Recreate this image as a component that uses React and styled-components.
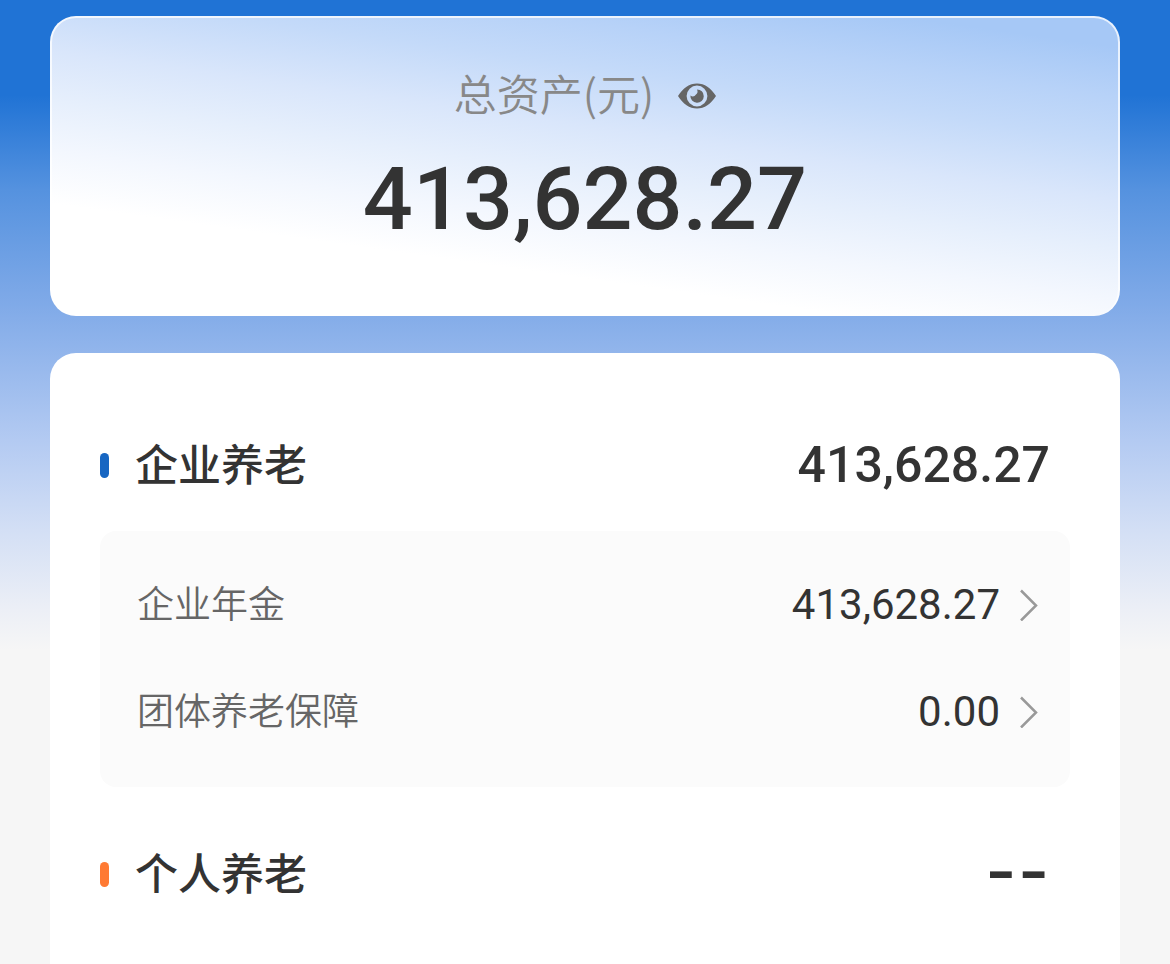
import { useState } from "react";
import styled, { createGlobalStyle } from "styled-components";

const GlobalStyle = createGlobalStyle`
  * {
    box-sizing: border-box;
  }
  body {
    margin: 0;
    background-color: #f6f6f6;
    font-family: "Noto Sans CJK SC", sans-serif;
    color: #333333;
  }
  h1,
  h2,
  p,
  ul {
    margin: 0;
    padding: 0;
  }
`;

const Page = styled.main`
  display: flex;
  flex-direction: column;
  gap: 37px;
  min-height: 100vh;
  padding: 16px 50px 0;
  background: linear-gradient(
    180deg,
    #2073d5 0,
    #2073d5 95px,
    #5592df 190px,
    #80aae8 305px,
    #b3caf2 440px,
    #d3dff5 530px,
    #eceff6 610px,
    #f6f6f6 650px,
    #f6f6f6 100%
  );
`;

const TotalCard = styled.section`
  display: flex;
  flex-direction: column;
  align-items: center;
  height: 300px;
  padding-top: 48px;
  border: 2px solid rgba(255, 255, 255, 0.75);
  border-bottom: none;
  border-radius: 26px;
  background: linear-gradient(
      188deg,
      #a6c8f6 7%,
      #b7d2f8 18%,
      #c4daf9 28%,
      #d9e6fb 41%,
      #e6effc 52%,
      #f3f7fe 63%,
      #ffffff 75%
    )
    border-box;
`;

const TotalHeader = styled.div`
  display: flex;
  align-items: center;
  gap: 24px;
  height: 60px;
`;

const TotalLabel = styled.h1`
  padding-bottom: 8px;
  font-size: 43px;
  font-weight: 350;
  line-height: 52px;
  color: #888888;
`;

const EyeButton = styled.button`
  display: flex;
  padding: 0;
  border: none;
  background: none;
  color: #666666;
  cursor: pointer;
`;

const Amount = styled.p`
  font-family: Roboto, "Liberation Sans", sans-serif;
  font-size: ${({ $size }) => $size}px;
  font-weight: ${({ $weight }) => $weight || 500};
  line-height: 1;
`;

const TotalAmount = styled(Amount)`
  margin-top: 29px;
`;

const DetailCard = styled.section`
  flex: 1;
  padding: 79px 50px 0;
  border-radius: 26px 26px 0 0;
  background-color: #ffffff;
`;

const Group = styled.section`
  margin-bottom: 54px;
`;

const GroupHeader = styled.header`
  display: flex;
  align-items: center;
  height: 66px;
  padding-right: 20px;
`;

const Marker = styled.span`
  width: 9px;
  height: 25px;
  margin-right: 26px;
  border-radius: 5px;
  background-color: ${({ $color }) => $color};
`;

const GroupTitle = styled.h2`
  flex: 1;
  padding-bottom: 6px;
  font-size: 43px;
  font-weight: 500;
  line-height: 60px;
`;

const EmptyAmount = styled(Amount)`
  padding-bottom: 14px;
  font-family: Lato, "Liberation Sans", sans-serif;
`;

const ProductList = styled.ul`
  margin-top: 33px;
  padding: 20px 32px 22px 37px;
  border-radius: 16px;
  background-color: #fbfbfb;
  list-style: none;
`;

const ProductLink = styled.a`
  display: flex;
  align-items: center;
  height: 107px;
  color: inherit;
  text-decoration: none;
`;

const ProductName = styled.span`
  flex: 1;
  padding-bottom: 6px;
  font-size: 37px;
  font-weight: 350;
  color: #666666;
`;

const Chevron = styled.svg`
  margin-left: 19px;
`;

const EyeIcon = () => (
  <svg width="38" height="26" viewBox="0 0 38 26" aria-hidden="true">
    <path
      fill="currentColor"
      fillRule="evenodd"
      d="M0 13C5 5 11.500 0.500 19 0.500S33 5 38 13C33 21 26.500 25.500 19 25.500S5 21 0 13ZM19 2.600A10.400 10.400 0 1 0 19 23.400A10.400 10.400 0 1 0 19 2.600Z"
    />
    <path
      fill="currentColor"
      d="M19 6.400A6.700 6.700 0 1 1 12.400 12.600A4.200 4.200 0 0 0 18 11.600A4.300 4.300 0 0 0 19 6.400Z"
    />
  </svg>
);

const ChevronIcon = () => (
  <Chevron width="19" height="32" viewBox="0 0 19 32" aria-hidden="true">
    <path
      d="M2 1.500L17 16.500L2 31.500"
      fill="none"
      stroke="#999999"
      strokeWidth="2.500"
    />
  </Chevron>
);

const groups = [
  {
    title: "企业养老",
    color: "#1766c2",
    amount: "413,628.27",
    products: [
      { name: "企业年金", amount: "413,628.27" },
      { name: "团体养老保障", amount: "0.00" },
    ],
  },
  {
    title: "个人养老",
    color: "#ff7a33",
    amount: null,
    products: [],
  },
];

const App = () => {
  const [visible, setVisible] = useState(true);

  const show = (amount) => (visible ? amount : "****");

  return (
    <>
      <GlobalStyle />
      <Page>
        <TotalCard>
          <TotalHeader>
            <TotalLabel>总资产(元)</TotalLabel>
            <EyeButton
              type="button"
              aria-label="显示或隐藏金额"
              onClick={() => setVisible(!visible)}
            >
              <EyeIcon />
            </EyeButton>
          </TotalHeader>
          <TotalAmount $size={88}>{show("413,628.27")}</TotalAmount>
        </TotalCard>
        <DetailCard>
          {groups.map((group) => (
            <Group key={group.title}>
              <GroupHeader>
                <Marker $color={group.color} />
                <GroupTitle>{group.title}</GroupTitle>
                {group.amount ? (
                  <Amount $size={50}>{show(group.amount)}</Amount>
                ) : (
                  <EmptyAmount $size={88} $weight={400}>
                    --
                  </EmptyAmount>
                )}
              </GroupHeader>
              {group.products.length > 0 && (
                <ProductList>
                  {group.products.map((product) => (
                    <li key={product.name}>
                      <ProductLink href="#">
                        <ProductName>{product.name}</ProductName>
                        <Amount as="span" $size={42} $weight={400}>
                          {show(product.amount)}
                        </Amount>
                        <ChevronIcon />
                      </ProductLink>
                    </li>
                  ))}
                </ProductList>
              )}
            </Group>
          ))}
        </DetailCard>
      </Page>
    </>
  );
};

export default App;
